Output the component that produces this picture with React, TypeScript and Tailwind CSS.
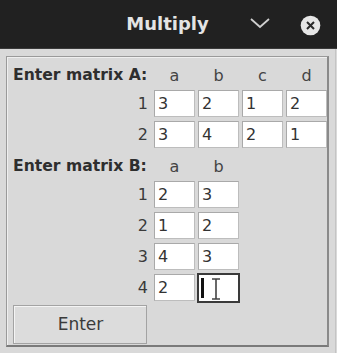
import React from "react";

const font = { fontFamily: '"DejaVu Sans", "Liberation Sans", sans-serif' };

function Field({ v, focused }: { v?: string; focused?: boolean }) {
  if (focused) {
    return (
      <div className="relative w-[43px] h-[30px] -mt-[1px] -ml-[1px] border-2 border-[#3a3a3a] bg-white flex items-center">
        <div className="ml-[2px] w-[3px] h-[20px] bg-[#111]" />
        <svg className="absolute left-[12px] top-[3px]" width="10" height="22" viewBox="0 0 10 22">
          <path d="M1 1 H9 M5 1 V21 M1 21 H9" stroke="#444" strokeWidth="1.6" fill="none" />
        </svg>
      </div>
    );
  }
  return (
    <div className="w-[41px] h-[27px] border border-[#bdbdbd] border-t-[#a9a9a9] border-l-[#a9a9a9] bg-white flex items-center pl-[3px] text-[16px] text-[#333] leading-none">
      {v}
    </div>
  );
}

function Row({ n, vals, focusLast }: { n: string; vals: string[]; focusLast?: boolean }) {
  return (
    <div className="flex h-[31px] items-start">
      <div className="w-[141px] h-[27px] flex items-center justify-end pr-[1px] text-[16px] text-[#3a3a3a]">{n}</div>
      <div className="ml-[5px] flex gap-[3px]">
        {vals.map((v, i) =>
          focusLast && i === vals.length - 1 ? <Field key={i} focused /> : <Field key={i} v={v} />
        )}
      </div>
    </div>
  );
}

function Header({ label, cols, h, pt }: { label: string; cols: string[]; h: string; pt: string }) {
  return (
    <div className={`flex items-center ${h} ${pt}`}>
      <div className="w-[141px] pl-[5px] text-[15.6px] font-bold text-[#2e2e2e] whitespace-nowrap">{label}</div>
      <div className="ml-[5px] flex gap-[3px]">
        {cols.map((c) => (
          <div key={c} className="w-[41px] text-center text-[16px] text-[#444]">{c}</div>
        ))}
      </div>
    </div>
  );
}

export default function App() {
  return (
    <div className="w-[337px] h-[353px] bg-[#d9d9d9] overflow-hidden" style={font}>
      <div className="h-[49px] bg-[#212121] relative flex items-center justify-center border-b border-[#3a3a3a]">
        <span className="text-[18px] font-bold text-[#e4e4e4] ml-[-2px] mt-[-1px]">Multiply</span>
        <svg className="absolute left-[249px] top-[17px]" width="22" height="12" viewBox="0 0 22 12">
          <path d="M2 2 L11 10 L20 2" stroke="#cfcfcf" strokeWidth="1.8" fill="none" />
        </svg>
        <svg className="absolute left-[300px] top-[15px]" width="21" height="21" viewBox="0 0 21 21">
          <circle cx="10.5" cy="10.5" r="9.8" fill="#e6e6e6" />
          <path d="M7 7 L14 14 M14 7 L7 14" stroke="#2a2a2a" strokeWidth="2" />
        </svg>
      </div>
      <div className="flex h-[304px] border-r border-[#c4c4c4] w-[336px]">
        <div className="ml-[6px] mt-[7px] w-[323px] h-[291px] border border-[#9a9a9a] border-b-2 border-r-2 border-b-[#7a7a7a] border-r-[#8a8a8a]">
          <div className="border-l border-t border-[#efefef] h-full">
            <Header label="Enter matrix A:" cols={["a", "b", "c", "d"]} h="h-[32px]" pt="pt-[4px]" />
            <Row n="1" vals={["3", "2", "1", "2"]} />
            <Row n="2" vals={["3", "4", "2", "1"]} />
            <Header label="Enter matrix B:" cols={["a", "b"]} h="h-[29px]" pt="pt-[1px]" />
            <Row n="1" vals={["2", "3"]} />
            <Row n="2" vals={["1", "2"]} />
            <Row n="3" vals={["4", "3"]} />
            <Row n="4" vals={["2", ""]} focusLast />
            <div className="ml-[5px] w-[134px] h-[39px] border border-[#a3a3a3] bg-[#dcdcdc] flex">
              <div className="flex-1 border-t border-l border-[#f4f4f4] flex items-center justify-center text-[17px] text-[#3a3a3a]">
                Enter
              </div>
            </div>
          </div>
        </div>
      </div>
    </div>
  );
}
